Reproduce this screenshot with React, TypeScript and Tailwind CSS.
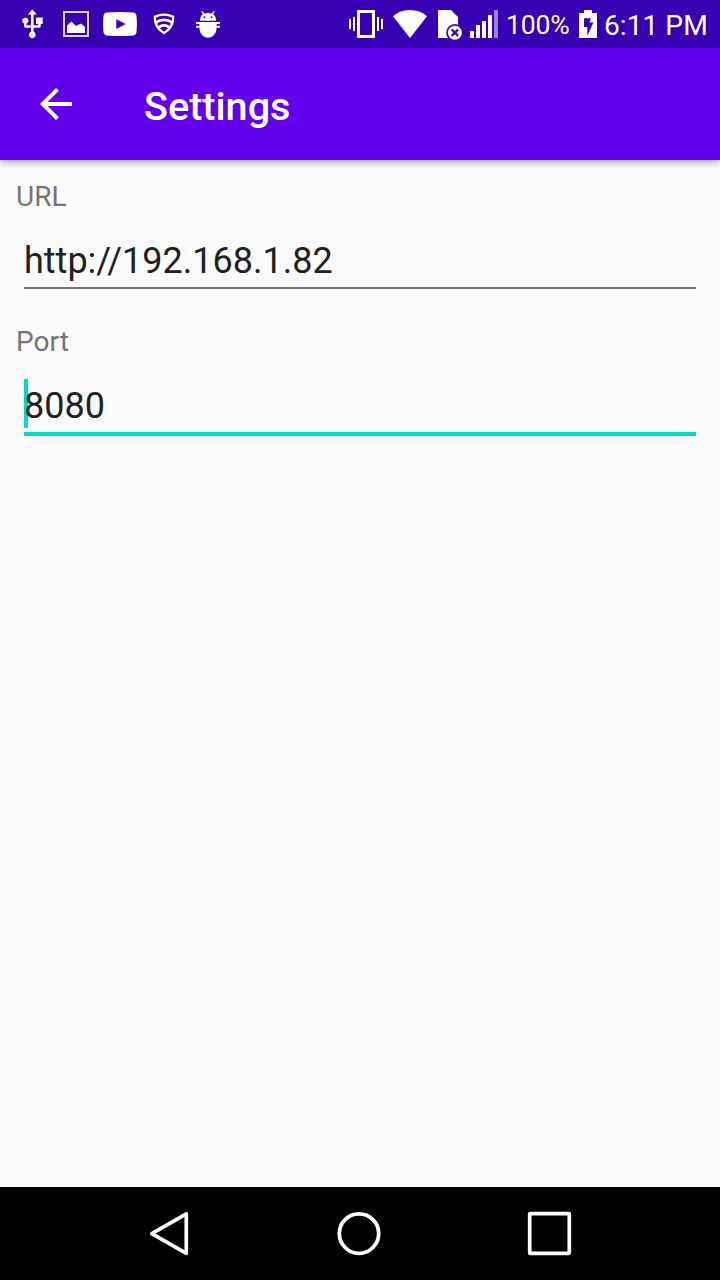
import type { ReactNode } from 'react';

type GlyphProps = { box: string; className: string; label: string; children: ReactNode };

function Glyph({ box, className, label, children }: GlyphProps) {
  return (
    <svg viewBox={box} className={`block shrink-0 ${className}`} fill="#fff" role="img" aria-label={label}>
      {children}
    </svg>
  );
}

function StatusBar() {
  return (
    <div className="relative z-10 flex h-12 items-start bg-[#3700b3] text-white">
      <Glyph box="0 0 22 48" className="ml-[22px] h-12 w-[22px]" label="USB">
        <path d="M10.3 9.5 14.8 14.6H11.6V25.3H16.2V23.9H14V17.4H20.7V23.9H18.7V26.2Q18.7 27.7 17 27.7H11.6V31.8A3.3 3.3 0 1 1 9 31.8V27.7H3.6Q2.1 27.7 2.1 26.2V23.6A3.1 3.1 0 1 1 4.5 23.6V25.3H9V14.6H5.8Z" />
      </Glyph>
      <Glyph box="0 0 26 48" className="ml-[19px] h-12 w-[26px]" label="Picture">
        <rect x="1" y="12" width="24" height="24" fill="none" stroke="#dcd2f2" strokeWidth="2" />
        <path d="M4 33V25.5L8.5 21.5 13 26 18 23.5 22 27V33Z" />
      </Glyph>
      <Glyph box="0 0 34 48" className="ml-[14px] h-12 w-[34px]" label="Video">
        <path fillRule="evenodd" d="M4 12.5Q17 11.5 30 12.5Q33 12.8 33.5 16Q34.3 24 33.5 32Q33 35.2 30 35.5Q17 36.5 4 35.5Q1 35.2.5 32Q-.3 24 .5 16Q1 12.8 4 12.5ZM13.3 19.3V28.9L22.7 24.1Z" />
      </Glyph>
      <Glyph box="0 0 22 48" className="ml-4 h-12 w-[22px]" label="Secure Wi-Fi">
        <g fill="none" stroke="#fff" strokeWidth="2.3" strokeLinejoin="round" strokeLinecap="round">
          <path d="M1.8 16.8Q11 12.4 20.2 16.8Q20.7 27 11 33.1Q1.3 27 1.8 16.8Z" />
          <path d="M3 22.4Q11 17.4 19 22.4" strokeWidth="2.6" />
          <path d="M5.5 27.4Q11 23.2 16.5 27.4" strokeWidth="2.6" />
        </g>
      </Glyph>
      <Glyph box="0 0 24 48" className="ml-[21px] h-12 w-6" label="Debugging">
        <path d="M6.2 11.8 8 14.5M17.8 11.8 16 14.5" stroke="#fff" strokeWidth="1.5" strokeLinecap="round" />
        <path fillRule="evenodd" d="M3.8 20.7Q3.8 13 12 13Q20.2 13 20.2 20.7ZM8.5 16.2A1 1 0 1 0 8.5 18.2A1 1 0 1 0 8.5 16.2ZM15.5 16.2A1 1 0 1 0 15.5 18.2A1 1 0 1 0 15.5 16.2Z" />
        <path d="M0 22H24V23.9H20.6V25.8H24V27.8H20.6Q20.4 33 17.5 35.5Q15 37.7 12 37.7Q9 37.7 6.5 35.5Q3.6 33 3.4 27.8H0V25.8H3.4V23.9H0Z" />
      </Glyph>
      <Glyph box="0 0 34 48" className="ml-[129px] h-12 w-[34px]" label="Vibrate">
        <path fillRule="evenodd" d="M9 10H25Q26 10 26 11V37Q26 38 25 38H9Q8 38 8 37V11Q8 10 9 10ZM11 13V35H23V13Z" />
        <path d="M0 19H2V29H0ZM4 17H6V31H4ZM28 17H30V31H28ZM32 19H34V29H32Z" />
      </Glyph>
      <Glyph box="0 0 34 48" className="ml-[10px] h-12 w-[34px]" label="Wi-Fi">
        <path d="M0 16.2Q7 10 17 10Q27 10 34 16.2L17 38Z" />
      </Glyph>
      <Glyph box="0 0 25 48" className="ml-[11px] h-12 w-[25px]" label="No SIM card">
        <path d="M0 10H13L20 17V38H0Z" />
        <circle cx="16.9" cy="32.7" r="8.7" fill="#3700b3" />
        <circle cx="16.9" cy="32.7" r="7" />
        <path d="m13.7 29.5 6.4 6.4m0-6.4-6.4 6.4" stroke="#3700b3" strokeWidth="2.2" />
      </Glyph>
      <Glyph box="0 0 28 48" className="ml-[7px] h-12 w-7" label="Signal">
        <path d="M0 31H4V38H0ZM6 25H10V38H6ZM12 21H16V38H12ZM18 15H22V38H18Z" />
        <path d="M24 10H28V38H24Z" fill="#9b80d9" />
      </Glyph>
      <span className="ml-2 mt-[9px] w-[64px] whitespace-nowrap text-[26.6px] leading-8 tracking-[-0.2px]">100%</span>
      <Glyph box="0 0 18 48" className="ml-[9px] h-12 w-[18px]" label="Battery charging">
        <path fillRule="evenodd" d="M5 10H13V13H18V38H0V13H5ZM5 18.2H11.8L10.5 22.5H14.4L8.3 36V27H5Z" />
      </Glyph>
      <span className="ml-[7px] mt-[9px] whitespace-nowrap text-[28.2px] leading-[33px]">6:11 PM</span>
    </div>
  );
}

function AppBar() {
  return (
    <header className="relative flex h-28 items-center bg-[#6200ee] pl-8 text-white shadow-[0_2px_7px_rgba(0,0,0,0.38)]">
      <svg viewBox="0 0 24 24" className="block size-12" fill="#fff" role="img" aria-label="Back">
        <path d="M20 11H7.83l5.59-5.59L12 4l-8 8 8 8 1.41-1.41L7.83 13H20v-2z" />
      </svg>
      <h1 className="ml-16 mt-[5px] text-[39.6px] font-medium leading-[48px]">Settings</h1>
    </header>
  );
}

type FieldProps = { label: string; value: string; focused?: boolean };

function Field({ label, value, focused = false }: FieldProps) {
  return (
    <div className="h-[145px]">
      <div className="px-4 text-[28px] leading-[33px] text-[#757575]">{label}</div>
      <div className="relative mx-6 flex h-[78px] flex-col justify-between pt-[27px]">
        {focused && <span className="absolute left-0 top-[21px] h-[49px] w-1 bg-[#03dac5]" />}
        <div className="relative text-[36px] leading-[42px] text-[#212121]">{value}</div>
        <div className={focused ? 'h-1 shrink-0 bg-[#03dac5]' : 'mb-[2px] h-[2px] shrink-0 bg-[#757575]'} />
      </div>
    </div>
  );
}

function NavigationBar() {
  return (
    <nav className="flex h-[93px] items-start bg-black pt-6">
      <Glyph box="0 0 42 46" className="ml-[148px] h-[46px] w-[42px]" label="Back">
        <path d="M3.8 22.6 38.3 2.8V42.3Z" fill="none" stroke="#fff" strokeWidth="3.7" strokeLinejoin="round" />
      </Glyph>
      <Glyph box="0 0 46 46" className="ml-[146px] size-[46px]" label="Home">
        <circle cx="23" cy="22.6" r="19.7" fill="none" stroke="#fff" strokeWidth="3.8" />
      </Glyph>
      <Glyph box="0 0 46 46" className="ml-[145px] size-[46px]" label="Overview">
        <rect x="2.7" y="2.7" width="39.6" height="39.6" rx=".6" fill="none" stroke="#fff" strokeWidth="3.7" />
      </Glyph>
    </nav>
  );
}

export default function App() {
  return (
    <div className="flex h-[1280px] w-[720px] flex-col overflow-hidden bg-[#fafafa] font-['Roboto',sans-serif]">
      <StatusBar />
      <AppBar />
      <main className="flex-1 pt-5">
        <Field label="URL" value="http://192.168.1.82" />
        <Field label="Port" value="8080" focused />
      </main>
      <NavigationBar />
    </div>
  );
}
